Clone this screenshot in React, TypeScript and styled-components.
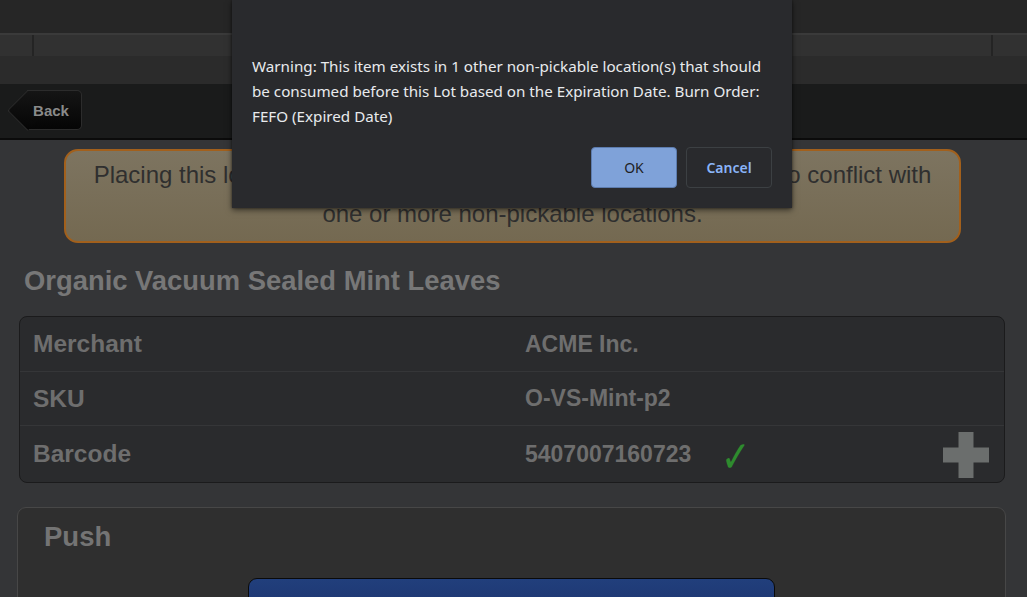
import React from "react";
import styled, { createGlobalStyle } from "styled-components";

const GlobalStyle = createGlobalStyle`
  html, body {
    margin: 0;
    padding: 0;
    background: #343537;
    overflow: hidden;
  }
  body {
    font-family: "Liberation Sans", Arial, sans-serif;
  }
`;

const Page = styled.div`
  position: relative;
  width: 1027px;
  height: 597px;
  overflow: hidden;
  background: #343537;
`;

const TopBar = styled.div`
  height: 33px;
  background: #262626;
  border-bottom: 2px solid #3a3a3a;
`;

const TabStrip = styled.div`
  height: 21px;
  background: #313131;
  display: grid;
  grid-template-columns: 32px 1fr 36px;
  & > div + div {
    border-left: 2px solid #242424;
  }
`;

const SubBar = styled.div`
  height: 28px;
  background: #2b2b2b;
`;

const Header = styled.div`
  height: 54px;
  background: #1a1b1b;
  border-bottom: 2px solid #0b0b0b;
  display: flex;
  align-items: center;
  padding-left: 27px;
`;

const BackButton = styled.button`
  position: relative;
  height: 40px;
  width: 55px;
  padding: 0 6px 0 0;
  border: 1px solid #2c2c2c;
  border-left: none;
  border-radius: 0 5px 5px 0;
  background: linear-gradient(#151515, #050505);
  color: #8a8a8a;
  font-family: "Liberation Sans", Arial, sans-serif;
  font-weight: bold;
  font-size: 15px;
  margin-top: -2px;

  &::before {
    content: "";
    position: absolute;
    left: -14px;
    top: 5px;
    width: 28px;
    height: 28px;
    transform: rotate(45deg);
    background: linear-gradient(135deg, #151515, #050505);
    border-left: 1px solid #2c2c2c;
    border-bottom: 1px solid #2c2c2c;
    border-radius: 0 0 0 3px;
  }

  span {
    position: relative;
  }
`;

const Content = styled.div`
  padding: 9px 21px 0 17px;
`;

const WarningBox = styled.div`
  margin: 0 45px 0 47px;
  padding: 4px 20px 8px;
  background: linear-gradient(#7d7460, #746951);
  border: 2px solid #a2601c;
  border-radius: 14px;
  color: #2f2f2f;
  font-size: 24px;
  line-height: 39px;
  text-align: center;
`;

const Title = styled.h2`
  margin: 20px 0 0 7px;
  font-size: 27.4px;
  font-weight: bold;
  color: #777777;
  line-height: 36px;
`;

const InfoTable = styled.div`
  margin: 17px 1px 0 2px;
  background: #2a2b2d;
  border: 1px solid #1b1b1c;
  border-radius: 8px;
  overflow: hidden;
`;

const Row = styled.div<{ $height: number }>`
  display: grid;
  grid-template-columns: 1fr 1fr;
  height: ${(p) => p.$height}px;
  align-items: center;
  & + & {
    border-top: 1px solid #353638;
  }
`;

const Cell = styled.div<{ $value?: boolean }>`
  padding-left: 13px;
  font-size: ${(p) => (p.$value ? 23 : 24.5)}px;
  font-weight: bold;
  color: #6e6e6e;
  display: flex;
  align-items: center;
`;

const Check = styled.span`
  margin-left: 30px;
  color: #2e8b2e;
  font-family: "DejaVu Sans", sans-serif;
  font-size: 44px;
  font-weight: normal;
  line-height: 1;
  margin-top: 6px;
  transform: scaleX(0.8);
  transform-origin: left;
`;

const PlusIcon = styled.svg`
  margin-left: auto;
  margin-right: 15px;
  margin-top: 2px;
`;

const PushPanel = styled.div`
  margin: 24px 0 0 0;
  height: 120px;
  background: #2f2f2f;
  border: 1px solid #474747;
  border-radius: 9px;
  padding: 13px 26px 0;
`;

const PanelTitle = styled.h3`
  margin: 0;
  font-size: 27.5px;
  font-weight: bold;
  color: #747474;
  line-height: 32px;
`;

const PrimaryButton = styled.button`
  display: block;
  margin: 25px auto 0;
  width: 527px;
  height: 60px;
  border: 1px solid #0a0a0a;
  border-radius: 9px;
  background: linear-gradient(#213f7c, #1a2d66);
  color: #8b8b8b;
  font-family: "Liberation Sans", Arial, sans-serif;
  font-weight: bold;
  font-size: 26px;
  padding-top: 6px;
`;

const Dialog = styled.div`
  position: absolute;
  top: 0;
  left: 232px;
  width: 520px;
  padding: 54px 20px 20px;
  background: #292a2d;
  box-shadow: 0 2px 6px rgba(0, 0, 0, 0.55), 0 0 2px rgba(0, 0, 0, 0.4);
  font-family: "Segoe UI", "Noto Sans", "Open Sans", sans-serif;
  color: #e8eaed;
`;

const DialogText = styled.p`
  margin: 0;
  font-size: 15.2px;
  line-height: 25px;
`;

const DialogActions = styled.div`
  display: flex;
  justify-content: flex-end;
  gap: 9px;
  margin-top: 18px;
`;

const DialogButton = styled.button<{ $primary?: boolean }>`
  height: 41px;
  min-width: 86px;
  padding: 0 18px;
  border-radius: 4px;
  font-family: "Segoe UI", "Noto Sans", "Open Sans", sans-serif;
  font-size: 14px;
  border: 1px solid ${(p) => (p.$primary ? "#5d7cae" : "#3c4043")};
  background: ${(p) => (p.$primary ? "#7fa2d9" : "#292a2d")};
  color: ${(p) => (p.$primary ? "#202124" : "#8ab4f8")};
  font-weight: ${(p) => (p.$primary ? 400 : 600)};
`;

export default function App() {
  return (
    <>
      <GlobalStyle />
      <Page>
        <TopBar />
        <TabStrip>
          <div />
          <div />
          <div />
        </TabStrip>
        <SubBar />
        <Header>
          <BackButton>
            <span>Back</span>
          </BackButton>
        </Header>

        <Content>
          <WarningBox>
            Placing this lot into this location will cause the FEFO Burn Order to conflict with
            one or more non-pickable locations.
          </WarningBox>

          <Title>Organic Vacuum Sealed Mint Leaves</Title>

          <InfoTable>
            <Row $height={54}>
              <Cell>Merchant</Cell>
              <Cell $value>ACME Inc.</Cell>
            </Row>
            <Row $height={53}>
              <Cell>SKU</Cell>
              <Cell $value>O-VS-Mint-p2</Cell>
            </Row>
            <Row $height={56}>
              <Cell>Barcode</Cell>
              <Cell $value>
                5407007160723
                <Check>✓</Check>
                <PlusIcon width="46" height="46" viewBox="0 0 46 46">
                  <path d="M15.5 0h15v15.5H46v15H30.5V46h-15V30.5H0v-15h15.5z" fill="#6b6e6d" />
                </PlusIcon>
              </Cell>
            </Row>
          </InfoTable>

          <PushPanel>
            <PanelTitle>Push</PanelTitle>
            <PrimaryButton>Push Lot</PrimaryButton>
          </PushPanel>
        </Content>

        <Dialog>
          <DialogText>
            Warning: This item exists in 1 other non-pickable location(s) that should be consumed
            before this Lot based on the Expiration Date. Burn Order: FEFO (Expired Date)
          </DialogText>
          <DialogActions>
            <DialogButton $primary>OK</DialogButton>
            <DialogButton>Cancel</DialogButton>
          </DialogActions>
        </Dialog>
      </Page>
    </>
  );
}
